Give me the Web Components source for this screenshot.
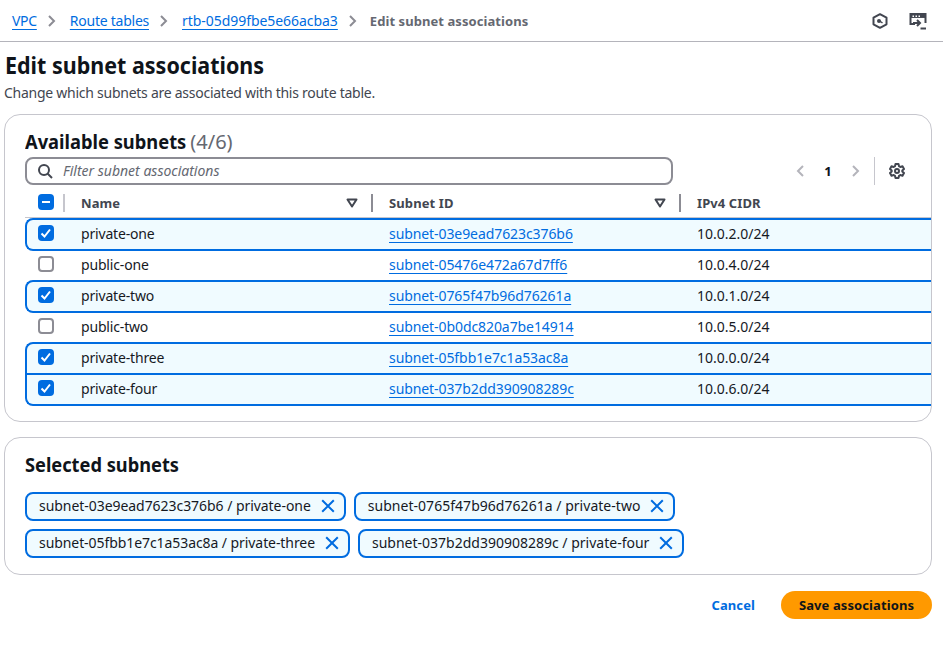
<!DOCTYPE html>
<html>
<head>
<meta charset="utf-8">
<title>Edit subnet associations</title>
<style>
  html, body { margin: 0; padding: 0; background: #fff; }
  body { font-family: "Noto Sans", sans-serif; color: #0f141a; }
</style>
</head>
<body>
<vpc-page></vpc-page>

<script>
const BLUE = '#006ce0';

const ICONS = {
  chevron: '<svg width="16" height="16" viewBox="0 0 16 16" fill="none" stroke="currentColor" stroke-width="2"><path d="m5 3 5 5-5 5"/></svg>',
  search: '<svg width="16" height="16" viewBox="0 0 16 16" fill="none" stroke="currentColor" stroke-width="2"><circle cx="7" cy="7" r="5"/><path d="m15 15-4.500-4.500"/></svg>',
  caret: '<svg width="12" height="12" viewBox="0 0 12 12" fill="none" stroke="currentColor" stroke-width="2" stroke-linejoin="round"><path d="M1.500 2.500h9L6 9.500z"/></svg>',
  gear: '<svg width="16" height="16" viewBox="0 0 16 16" fill="none" stroke="currentColor" stroke-width="2" stroke-linejoin="round"><path d="M6.500 1h3l.5 2.200 1.300.8 2.200-.7 1.500 2.600-1.700 1.500v1.200l1.700 1.500-1.500 2.600-2.200-.7-1.300.8-.5 2.200h-3L6 12.800l-1.300-.8-2.200.7L1 10.100l1.700-1.500V7.400L1 5.900l1.500-2.600 2.200.7 1.300-.8z"/><circle cx="8" cy="8" r="2"/></svg>',
  close: '<svg width="16" height="16" viewBox="0 0 16 16" fill="none" stroke="currentColor" stroke-width="2"><path d="m2.200 2.200 11.600 11.600M13.800 2.200 2.200 13.800"/></svg>',
  hex: '<svg width="16" height="16" viewBox="0 0 16 16" fill="none" stroke="currentColor" stroke-width="2" stroke-linejoin="round"><path d="M8 1.200 14.500 4.700v6.600L8 14.800 1.500 11.300V4.700z"/><path d="M7 7.500 10.500 10" stroke-width="1.500"/><circle cx="7" cy="8" r="2" fill="currentColor" stroke="none"/></svg>',
  shell: '<svg width="18" height="18" viewBox="0 0 18 18" fill="none" stroke="currentColor" stroke-width="2"><path d="M6 12H1.500V2h15v9"/><path d="M2 4.200h14" stroke-width="3.500"/><path d="M3.500 4.200h1.500M6.500 4.200h1.500M9.500 4.200h1.500" stroke="#fff" stroke-width="1.500"/><path d="M4 11h7M8 8l3 3-3 3"/><path d="M11.500 16.500h5.500"/></svg>'
};

class BreadcrumbBar extends HTMLElement {
  constructor() {
    super();
    this.attachShadow({ mode: 'open' });
  }
  connectedCallback() {
    const links = [['VPC', -0.3], ['Route tables', -0.25], ['rtb-05d99fbe5e66acba3', -0.05]];
    this.shadowRoot.innerHTML = `
      <style>
        :host { display: flex; align-items: center; height: 41px; border-bottom: 1px solid #b4b4bb; padding: 0 16px 0 12px; font-size: 14px; }
        nav { display: flex; align-items: center; flex: 1; }
        a { color: ${BLUE}; text-decoration: underline; text-underline-offset: 3px; }
        .sep { display: flex; color: #8c8c94; margin: 0 10px 0 7px; }
        b { color: #656871; font-size: 13px; font-weight: 700; letter-spacing: .07px; margin-left: -1px; }
        .tools { display: flex; align-items: center; gap: 21px; color: #424650; }
      </style>
      <nav>
        ${links.map(l => `<a href="#" style="letter-spacing:${l[1]}px">${l[0]}</a><span class="sep">${ICONS.chevron}</span>`).join('')}
        <b>Edit subnet associations</b>
      </nav>
      <div class="tools">${ICONS.hex}${ICONS.shell}</div>
    `;
  }
}
customElements.define('breadcrumb-bar', BreadcrumbBar);

class ContentPanel extends HTMLElement {
  constructor() {
    super();
    this.attachShadow({ mode: 'open' });
    this.shadowRoot.innerHTML = `
      <style>
        :host { display: block; border: 1px solid #c6c6cd; border-radius: 16px; background: #fff; box-sizing: border-box; }
      </style>
      <slot></slot>
    `;
  }
}
customElements.define('content-panel', ContentPanel);

class CheckBox extends HTMLElement {
  constructor() {
    super();
    this.attachShadow({ mode: 'open' });
  }
  connectedCallback() {
    const state = this.getAttribute('state');
    let mark = '';
    if (state === 'checked') mark = '<svg width="16" height="16" viewBox="0 0 16 16" fill="none" stroke="#fff" stroke-width="2"><path d="m3.500 8.500 3 3 5.500-7"/></svg>';
    if (state === 'mixed') mark = '<svg width="16" height="16" viewBox="0 0 16 16" fill="none" stroke="#fff" stroke-width="2"><path d="M4 8h8"/></svg>';
    this.shadowRoot.innerHTML = `
      <style>
        :host { display: block; width: 16px; height: 16px; box-sizing: border-box; border-radius: 4px; }
        :host([state="checked"]), :host([state="mixed"]) { background: ${BLUE}; }
        :host(:not([state])) { border: 2px solid #8c8c94; background: #fff; }
        svg { display: block; }
      </style>
      ${mark}
    `;
  }
}
customElements.define('check-box', CheckBox);

class SubnetRow extends HTMLElement {
  constructor() {
    super();
    this.attachShadow({ mode: 'open' });
  }
  connectedCallback() {
    const checked = this.hasAttribute('selected');
    this.shadowRoot.innerHTML = `
      <style>
        :host { display: grid; grid-template-columns: 56px 308px 308px 1fr; align-items: center; height: 31px; font-size: 14px; position: relative; color: #16191f; }
        :host([selected])::before { content: ''; position: absolute; inset: 0 0 -2px 0; border: 2px solid ${BLUE}; border-right: 0; background: #f0fbff; z-index: 0; }
        :host([first])::before { border-top-left-radius: 8px; }
        :host([last])::before { border-bottom-left-radius: 8px; }
        .cell { position: relative; z-index: 1; }
        .check { align-self: start; padding: 7px 0 0 13px; }
        .name { letter-spacing: -.17px; }
        a { color: ${BLUE}; text-decoration: underline; text-underline-offset: 3px; letter-spacing: -.08px; }
      </style>
      <div class="cell check"><check-box ${checked ? 'state="checked"' : ''}></check-box></div>
      <div class="cell name">${this.getAttribute('name')}</div>
      <div class="cell"><a href="#">${this.getAttribute('subnet')}</a></div>
      <div class="cell">${this.getAttribute('cidr')}</div>
    `;
  }
}
customElements.define('subnet-row', SubnetRow);

class SubnetTable extends HTMLElement {
  constructor() {
    super();
    this.attachShadow({ mode: 'open' });
  }
  connectedCallback() {
    this.shadowRoot.innerHTML = `
      <style>
        :host { display: block; padding: 16px 0 15px 20px; }
        h2 { display: flex; margin: 0; font-size: 20px; line-height: 22px; font-weight: 700; white-space: nowrap; }
        h2 .t { display: block; transform: scaleX(.915); transform-origin: 0 0; margin-right: -15px; }
        h2 .n { font-weight: 400; color: #656871; margin-left: 4px; }
        .tools { display: flex; align-items: center; margin-top: 4px; height: 28px; padding-right: 26px; }
        .filter { width: 648px; height: 28px; box-sizing: border-box; border: 2px solid #8c8c94; border-radius: 8px; display: flex; align-items: center; gap: 10px; padding-left: 10px; color: #424650; font-size: 14px; font-style: italic; }
        .filter span { color: #656871; margin-top: -2px; }
        .pager { margin-left: auto; display: flex; align-items: center; color: #b4b4bb; }
        .pager b { color: #0f141a; font-size: 13px; font-weight: 700; width: 44px; text-align: center; }
        .arrow { width: 12px; height: 16px; display: flex; justify-content: center; }
        .arrow svg { flex: none; }
        .left { transform: scaleX(-1); }
        .divider { width: 1px; height: 28px; background: #c6c6cd; margin: 0 14px 0 12px; }
        .gear { display: flex; color: #424650; }
        .head { display: grid; grid-template-columns: 56px 308px 308px 1fr; height: 30px; margin-top: 3px; align-items: center; font-size: 13px; font-weight: 700; letter-spacing: .1px; color: #424650; border-bottom: 1px solid #c6c6cd; box-sizing: border-box; }
        .th { display: flex; align-items: center; height: 18px; }
        .th .label { flex: 1; }
        .th i { display: flex; margin-right: 13px; }
        .th u { width: 2px; height: 18px; background: #8c8c94; margin-right: 16px; }
        .c0 { padding-left: 13px; gap: 9px; }
        .c0 check-box { margin-top: -2px; }
        .c0 u { background: #c6c6cd; margin: 0; }
      </style>
      <h2><span class="t">Available subnets</span><span class="n">(4/6)</span></h2>
      <div class="tools">
        <div class="filter">${ICONS.search}<span>Filter subnet associations</span></div>
        <div class="pager">
          <span class="arrow left">${ICONS.chevron}</span><b>1</b><span class="arrow">${ICONS.chevron}</span>
          <span class="divider"></span>
          <span class="gear">${ICONS.gear}</span>
        </div>
      </div>
      <div class="head">
        <div class="th c0"><check-box state="mixed"></check-box><u></u></div>
        <div class="th"><span class="label">Name</span><i>${ICONS.caret}</i><u></u></div>
        <div class="th"><span class="label">Subnet ID</span><i>${ICONS.caret}</i><u></u></div>
        <div class="th"><span class="label">IPv4 CIDR</span></div>
      </div>
      <slot></slot>
    `;
  }
}
customElements.define('subnet-table', SubnetTable);

class SubnetToken extends HTMLElement {
  constructor() {
    super();
    this.attachShadow({ mode: 'open' });
    this.shadowRoot.innerHTML = `
      <style>
        :host { display: inline-flex; align-items: center; height: 29px; box-sizing: border-box; border: 2px solid ${BLUE}; border-radius: 8px; background: #f0fbff; padding: 0 8px 2px 12px; font-size: 14px; color: #16191f; gap: 9px; }
        span { display: flex; color: ${BLUE}; }
      </style>
      <slot></slot><span>${ICONS.close}</span>
    `;
  }
}
customElements.define('subnet-token', SubnetToken);

class VpcPage extends HTMLElement {
  constructor() {
    super();
    this.attachShadow({ mode: 'open' });
  }
  connectedCallback() {
    // last column: tracking of the token text, the reference's glyph widths differ a bit per name
    const rows = [
      ['private-one', 'subnet-03e9ead7623c376b6', '10.0.2.0/24', 'selected first last', -0.05],
      ['public-one', 'subnet-05476e472a67d7ff6', '10.0.4.0/24', ''],
      ['private-two', 'subnet-0765f47b96d76261a', '10.0.1.0/24', 'selected first last', 0.03],
      ['public-two', 'subnet-0b0dc820a7be14914', '10.0.5.0/24', ''],
      ['private-three', 'subnet-05fbb1e7c1a53ac8a', '10.0.0.0/24', 'selected first', -0.075],
      ['private-four', 'subnet-037b2dd390908289c', '10.0.6.0/24', 'selected last', 0]
    ];
    const tokens = rows.filter(r => r[3]).map(r => `<subnet-token style="letter-spacing:${r[4]}px">${r[1]} / ${r[0]}</subnet-token>`);
    this.shadowRoot.innerHTML = `
      <style>
        :host { display: block; }
        main { padding: 0 11px 0 4px; }
        h1 { margin: 8px 0 0 1px; font-size: 24px; line-height: 30px; font-weight: 700; white-space: nowrap; transform: scaleX(.895); transform-origin: 0 0; }
        p { margin: 4px 0 0 0; font-size: 14px; line-height: 18px; letter-spacing: -.26px; color: #424650; }
        .first { margin-top: 12px; height: 308px; overflow: hidden; }
        .second { margin-top: 15px; height: 138px; padding: 16px 20px; }
        h2 { margin: 0; font-size: 20px; line-height: 22px; font-weight: 700; white-space: nowrap; transform: scaleX(.911); transform-origin: 0 0; }
        .tokens { display: flex; flex-wrap: wrap; gap: 8px; margin-top: 16px; }
        footer { display: flex; justify-content: flex-end; align-items: center; margin-top: 16px; font-size: 13px; font-weight: 700; letter-spacing: .1px; }
        footer a { color: ${BLUE}; text-decoration: none; margin-right: 26px; }
        button { height: 28px; width: 151px; border: 0; border-radius: 20px; background: #ff9900; color: #0f141a; font: inherit; letter-spacing: inherit; font-weight: 700; }
      </style>
      <breadcrumb-bar></breadcrumb-bar>
      <main>
        <h1>Edit subnet associations</h1>
        <p>Change which subnets are associated with this route table.</p>
        <content-panel class="first">
          <subnet-table>
            ${rows.map(r => `<subnet-row name="${r[0]}" subnet="${r[1]}" cidr="${r[2]}" ${r[3]}></subnet-row>`).join('')}
          </subnet-table>
        </content-panel>
        <content-panel class="second">
          <h2>Selected subnets</h2>
          <div class="tokens">${tokens.join('')}</div>
        </content-panel>
        <footer><a href="#">Cancel</a><button>Save associations</button></footer>
      </main>
    `;
  }
}
customElements.define('vpc-page', VpcPage);
</script>
</body>
</html>
